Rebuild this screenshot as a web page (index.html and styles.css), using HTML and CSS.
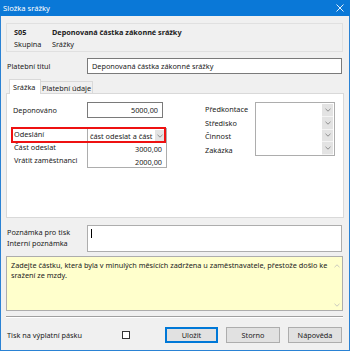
FILE: index.html
```html
<!DOCTYPE html>
<html lang="cs">
<head>
<meta charset="utf-8">
<title>Složka srážky</title>
<link rel="stylesheet" href="styles.css">
</head>
<body>
<div class="window">
  <div class="titlebar">
    <span class="title">Složka srážky</span>
    <svg class="close" width="8" height="8" viewBox="0 0 8 8"><path d="M0.5 0.5 L7.5 7.5 M7.5 0.5 L0.5 7.5" stroke="#fff" stroke-width="0.9" fill="none"/></svg>
  </div>
  <div class="body">
    <div class="header">
      <div class="hrow"><span class="hcode b">S05</span><span class="b">Deponovaná částka zákonné srážky</span></div>
      <div class="hrow"><span class="hcode">Skupina</span><span>Srážky</span></div>
    </div>
    <div class="titlerow">
      <span class="lbl">Platební titul</span>
      <div class="input wide">Deponovaná částka zákonné srážky</div>
    </div>
    <div class="tabs">
      <div class="tab active">Srážka</div>
      <div class="tab second">Platební údaje</div>
    </div>
    <div class="panel">
      <div class="leftcol">
        <div class="deprow">
          <span class="plbl">Deponováno</span>
          <div class="input num">5000,00</div>
        </div>
        <div class="group">
          <div class="highlight"></div>
          <div class="glabels">
            <span>Odeslání</span>
            <span>Část odeslat</span>
            <span>Vrátit zaměstnanci</span>
          </div>
          <div class="gbox">
            <div class="grow combo"><span>část odeslat a část</span><span class="dd"><svg width="6" height="4" viewBox="0 0 6 4"><path d="M0.5 0.8 L3 3.2 L5.5 0.8" stroke="#777" stroke-width="0.8" fill="none"/></svg></span></div>
            <div class="grow num">3000,00</div>
            <div class="grow num">2000,00</div>
          </div>
        </div>
      </div>
      <div class="rightcol">
        <div class="rlabels">
          <span>Předkontace</span>
          <span>Středisko</span>
          <span>Činnost</span>
          <span>Zakázka</span>
        </div>
        <div class="rbox">
          <span class="dd2"><svg width="6" height="4" viewBox="0 0 6 4"><path d="M0.5 0.8 L3 3.2 L5.5 0.8" stroke="#777" stroke-width="0.8" fill="none"/></svg></span>
          <span class="dd2"><svg width="6" height="4" viewBox="0 0 6 4"><path d="M0.5 0.8 L3 3.2 L5.5 0.8" stroke="#777" stroke-width="0.8" fill="none"/></svg></span>
          <span class="dd2"><svg width="6" height="4" viewBox="0 0 6 4"><path d="M0.5 0.8 L3 3.2 L5.5 0.8" stroke="#777" stroke-width="0.8" fill="none"/></svg></span>
          <span class="dd2"><svg width="6" height="4" viewBox="0 0 6 4"><path d="M0.5 0.8 L3 3.2 L5.5 0.8" stroke="#777" stroke-width="0.8" fill="none"/></svg></span>
        </div>
      </div>
    </div>
    <div class="notes">
      <div class="nlabels">
        <span>Poznámka pro tisk</span>
        <span>Interní poznámka</span>
      </div>
      <div class="textarea"><span class="caret"></span></div>
    </div>
    <div class="hint">
      <p>Zadejte částku, která byla v minulých měsících zadržena u zaměstnavatele, přestože došlo ke sražení ze mzdy.</p>
      <div class="vscroll">
        <svg width="6" height="4" viewBox="0 0 6 4"><path d="M0.5 3.2 L3 0.8 L5.5 3.2" stroke="#bbb" stroke-width="0.8" fill="none"/></svg>
        <svg width="6" height="4" viewBox="0 0 6 4"><path d="M0.5 0.8 L3 3.2 L5.5 0.8" stroke="#bbb" stroke-width="0.8" fill="none"/></svg>
      </div>
    </div>
    <div class="sep"></div>
    <div class="footer">
      <span class="lbl">Tisk na výplatní pásku</span>
      <span class="checkbox"></span>
      <div class="buttons">
        <button class="btn default">Uložit</button>
        <button class="btn">Storno</button>
        <button class="btn">Nápověda</button>
      </div>
    </div>
  </div>
</div>
</body>
</html>
```

FILE: styles.css
```css
* { box-sizing: border-box; }
html, body { margin: 0; padding: 0; }
body {
  width: 350px;
  height: 351px;
  background: #fff;
  font-family: "Noto Sans", "Open Sans", sans-serif;
  font-size: 7.3px;
  color: #222;
}
.window {
  width: 350px;
  height: 351px;
  display: flex;
  flex-direction: column;
}
.titlebar {
  height: 16px;
  background: #0a78d7;
  color: #fff;
  display: flex;
  align-items: center;
  justify-content: space-between;
  padding: 0 6px 0 3px;
  font-size: 7.6px;
}
.close { display: block; }
.body {
  flex: 1;
  background: #f0f0f0;
  border: 1px solid #2a82d4;
  border-top: 0;
  padding: 7px 6px 0 5px;
  display: flex;
  flex-direction: column;
}
.b { font-weight: 700; }
.header {
  height: 29px;
  border: 1px solid #e0e0e0;
  padding: 2px 0 0 7px;
}
.hrow {
  display: flex;
  height: 12px;
  align-items: center;
}
.hcode { width: 38px; }
.titlerow {
  display: flex;
  align-items: center;
  margin-top: 6px;
  height: 16px;
}
.lbl { width: 81px; padding-left: 1px; }
.input {
  background: #fff;
  border: 1px solid #7a7a7a;
  height: 16px;
  display: flex;
  align-items: center;
  padding: 0 4px;
}
.wide { flex: 1; margin-right: 1px; }
.num { justify-content: flex-end; }
.tabs {
  display: flex;
  align-items: flex-end;
  margin-top: 5px;
  height: 14px;
  padding-left: 3px;
}
.tab {
  height: 12px;
  border: 1px solid #d9d9d9;
  border-bottom: 0;
  background: #f0f0f0;
  padding: 0 3px;
  display: flex;
  align-items: center;
  white-space: nowrap;
}
.tab.active {
  height: 15px;
  background: #fff;
  width: 32px;
  padding: 2px 3px 0;
  margin-bottom: -1px;
  position: relative;
  z-index: 1;
  align-items: flex-start;
}
.tab.second { width: 52px; border-left: 0; justify-content: center; }
.panel {
  height: 125px;
  width: 338px;
  background: #fff;
  border: 1px solid #d9d9d9;
  display: flex;
  padding: 8px 0 0 6px;
}
.leftcol { width: 155px; }
.deprow {
  display: flex;
  align-items: center;
  height: 16px;
}
.plbl { width: 74px; }
.deprow .input { width: 76px; }
.group {
  position: relative;
  display: flex;
  margin-top: 10px;
}
.highlight {
  position: absolute;
  left: -2px;
  top: -1px;
  width: 155px;
  height: 16px;
  border: 2px solid #ee1111;
  pointer-events: none;
}
.glabels {
  width: 74px;
  display: flex;
  flex-direction: column;
  padding-left: 1px;
}
.glabels span { height: 13px; line-height: 13px; }
.gbox {
  width: 80px;
  height: 40px;
  border: 1px solid #adadad;
  background: #fff;
}
.grow {
  height: 13px;
  display: flex;
  align-items: center;
  padding: 0 4px 0 2px;
}
.combo { justify-content: space-between; padding: 0 2px 0 2px; }
.dd {
  width: 9px;
  height: 11px;
  background: #e3e3e3;
  display: flex;
  align-items: center;
  justify-content: center;
}
.rightcol {
  display: flex;
  margin-left: 37px;
}
.rlabels {
  width: 50px;
  display: flex;
  flex-direction: column;
  padding-top: 1px;
}
.rlabels span { height: 13.5px; line-height: 13px; }
.rbox {
  width: 80px;
  height: 54px;
  background: #fff;
  border: 1px solid #adadad;
  display: flex;
  flex-direction: column;
  align-items: flex-end;
  padding: 1px 1px 0 0;
}
.dd2 {
  width: 11px;
  height: 13px;
  background: #e3e3e3;
  border-bottom: 1px solid #f4f4f4;
  display: flex;
  align-items: center;
  justify-content: center;
}
.notes {
  display: flex;
  margin-top: 7px;
  height: 27px;
}
.nlabels {
  width: 81px;
  padding-left: 1px;
  display: flex;
  flex-direction: column;
  padding-top: 2px;
}
.nlabels span { height: 11px; line-height: 11px; }
.textarea {
  flex: 1;
  margin-right: 1px;
  background: #fff;
  border: 1px solid #adadad;
  padding: 3px 0 0 3px;
}
.caret {
  display: block;
  width: 1px;
  height: 9px;
  background: #000;
}
.hint {
  margin-top: 4px;
  height: 55px;
  width: 337px;
  background: #ffffcc;
  border: 1px solid #adadad;
  display: flex;
  padding: 3px 0 0 4px;
}
.hint p {
  margin: 0;
  flex: 1;
  line-height: 10px;
}
.vscroll {
  width: 11px;
  display: flex;
  flex-direction: column;
  justify-content: space-between;
  align-items: center;
  padding: 4px 0 3px;
}
.vscroll svg { display: block; }
.sep {
  margin-top: 5px;
  height: 2px;
  width: 337px;
  border-top: 1px solid #a0a0a0;
  border-bottom: 1px solid #fff;
}
.footer {
  display: flex;
  align-items: center;
  margin-top: 9px;
  height: 16px;
}
.footer .lbl { width: 116px; }
.checkbox {
  width: 8px;
  height: 8px;
  border: 1px solid #333;
  background: #fff;
}
.buttons {
  display: flex;
  margin-left: 35px;
  gap: 8px;
}
.btn {
  font: inherit;
  color: #222;
  height: 16px;
  width: 54px;
  background: #e1e1e1;
  border: 1px solid #adadad;
  padding: 0;
  margin: 0;
}
.btn.default { width: 53px; border: 1px solid #0078d7; box-shadow: inset 0 0 0 1px #0078d7; }
```
